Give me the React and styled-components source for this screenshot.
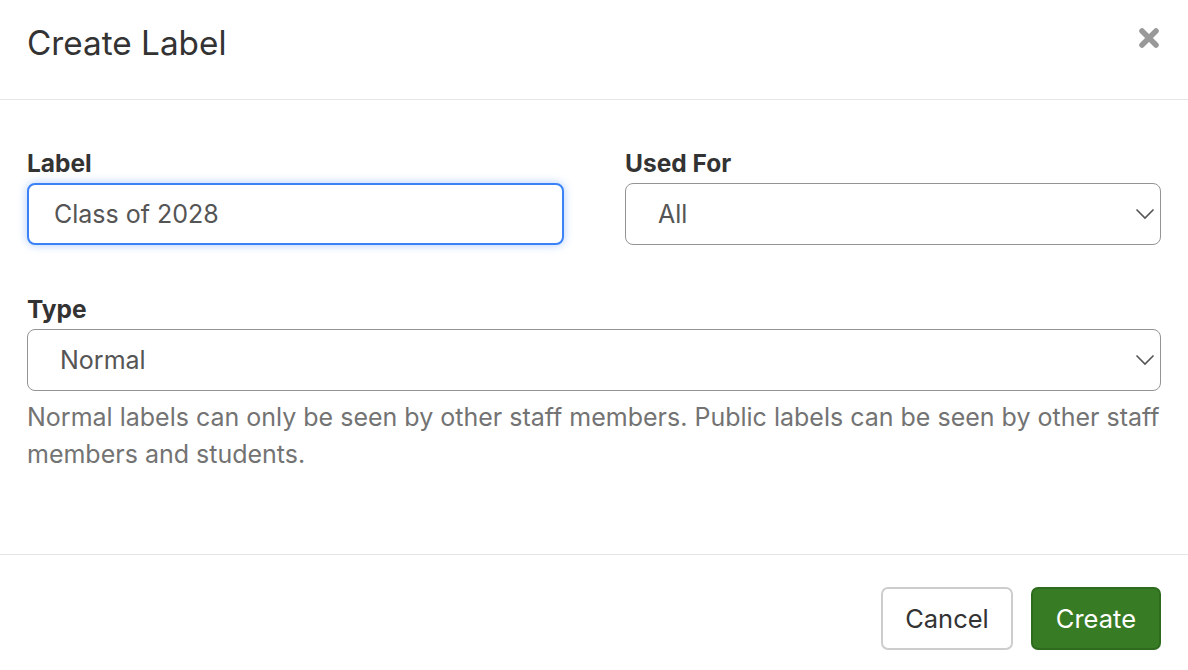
import styled, { createGlobalStyle } from "styled-components"

const Global = createGlobalStyle`
    html, body { margin: 0; padding: 0; background: #fff; }
    body {
        font-family: Inter, "Noto Sans", "Liberation Sans", sans-serif;
        color: #333;
        -webkit-font-smoothing: antialiased;
    }
    * { box-sizing: border-box; }
`

const Modal = styled.div`
    width: 1188px;
    height: 670px;
    background: #fff;
    display: flex;
    flex-direction: column;
`

const Header = styled.div`
    height: 100px;
    border-bottom: 1px solid #e5e5e5;
    padding: 0 27px;
    display: flex;
    align-items: center;
    justify-content: space-between;
`

const Title = styled.h4`
    margin: 0 0 14px;
    font-size: 33.3px;
    font-weight: 400;
    color: #333;
`

const Close = styled.button`
    border: 0;
    background: none;
    padding: 0;
    margin: 0 1px 24px 0;
    width: 22px;
    height: 22px;
    cursor: pointer;
    display: flex;
`

const Body = styled.div`
    padding: 48px 27px 0;
    height: 455px;
    border-bottom: 1px solid #e5e5e5;
`

const Row = styled.div`
    display: grid;
    grid-template-columns: 537px 536px;
    column-gap: 61px;
    margin-bottom: 49px;
`

const Group = styled.div`
    display: flex;
    flex-direction: column;
`

const Label = styled.label`
    font-size: 24.5px;
    line-height: 30px;
    font-weight: 700;
    color: #333;
    margin-bottom: 5px;
`

const Field = styled.div`
    height: 62px;
    border: ${(p) => (p.focused ? "2px solid #3b82f6" : "1.5px solid #949494")};
    border-radius: 8px;
    box-shadow: ${(p) => (p.focused ? "0 0 10px rgba(59,130,246,0.4)" : "none")};
    padding: 0 5px 0 ${(p) => p.indent || 25}px;
    display: flex;
    align-items: center;
    justify-content: space-between;
    font-size: 25px;
    color: #555;
    background: #fff;
`

const Help = styled.p`
    margin: 8px 0 0;
    font-size: 25px;
    line-height: 37px;
    color: #737373;
`

const Footer = styled.div`
    padding: 32px 27px 0;
    display: flex;
    justify-content: flex-end;
    gap: 18px;
`

const Button = styled.button`
    height: 63px;
    padding: 0 ${(p) => p.pad}px;
    border-radius: 7px;
    font-family: inherit;
    font-size: 25.5px;
    border: 2px solid ${(p) => (p.primary ? "#2e6b1e" : "#cdcdcd")};
    background: ${(p) => (p.primary ? "#387b25" : "#fff")};
    color: ${(p) => (p.primary ? "#fff" : "#333")};
    cursor: pointer;
`

function Chevron() {
    return (
        <svg width="20" height="12" viewBox="0 0 20 12">
            <path d="M1.5 1.5 L10 10 L18.5 1.5" fill="none" stroke="#555" strokeWidth="1.6" />
        </svg>
    )
}

function CloseIcon() {
    return (
        <svg width="22" height="22" viewBox="0 0 22 22">
            <path d="M4 4 L18 18 M18 4 L4 18" stroke="#999" strokeWidth="5.5" strokeLinecap="round" />
        </svg>
    )
}

export default function App() {
    return <>
        <Global />
        <Modal>
            <Header>
                <Title>Create Label</Title>
                <Close aria-label="Close"><CloseIcon /></Close>
            </Header>
            <Body>
                <Row>
                    <Group>
                        <Label>Label</Label>
                        <Field focused>Class of 2028</Field>
                    </Group>
                    <Group>
                        <Label>Used For</Label>
                        <Field indent={32}>All<Chevron /></Field>
                    </Group>
                </Row>
                <Group>
                    <Label>Type</Label>
                    <Field indent={32}>Normal<Chevron /></Field>
                    <Help>
                        Normal labels can only be seen by other staff members. Public labels can be seen by other staff members and students.
                    </Help>
                </Group>
            </Body>
            <Footer>
                <Button pad={22}>Cancel</Button>
                <Button primary pad={23}>Create</Button>
            </Footer>
        </Modal>
    </>
}
